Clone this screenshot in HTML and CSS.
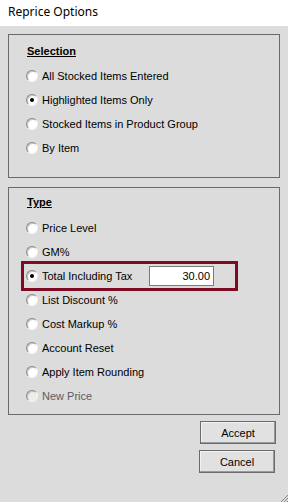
FILE: index.html
```html
<!DOCTYPE html>
<html lang="en">
<head>
  <meta charset="UTF-8" />
  <title>Reprice Options</title>
  <link rel="stylesheet" href="styles.css">
</head>
<body>
  <div class="titlebar">Reprice Options</div>
  <div class="dialog">
    <!-- Selection group -->
    <div class="group group-selection">
      <div class="group-title">Selection</div>
      <label class="option"><span class="radio"></span>All Stocked Items Entered</label>
      <label class="option"><span class="radio checked"></span>Highlighted Items Only</label>
      <label class="option"><span class="radio"></span>Stocked Items in Product Group</label>
      <label class="option"><span class="radio"></span>By Item</label>
    </div>

    <!-- Type group -->
    <div class="group group-type">
      <div class="group-title">Type</div>
      <label class="option"><span class="radio"></span>Price Level</label>
      <label class="option"><span class="radio"></span>GM%</label>
      <div class="option focus-row">
        <span class="radio checked"></span>
        <span class="focus-label">Total Including Tax</span>
        <span class="value-box">30.00</span>
      </div>
      <label class="option"><span class="radio"></span>List Discount %</label>
      <label class="option"><span class="radio"></span>Cost Markup %</label>
      <label class="option"><span class="radio"></span>Account Reset</label>
      <label class="option"><span class="radio"></span>Apply Item Rounding</label>
      <label class="option disabled"><span class="radio"></span>New Price</label>
    </div>

    <div class="buttons">
      <button class="btn btn-accept">Accept</button>
      <button class="btn btn-cancel">Cancel</button>
    </div>
  </div>

  <svg class="grip" width="8" height="8" viewBox="0 0 8 8">
    <path d="M8 1 L1 8 M8 4 L4 8 M8 7 L7 8" stroke="#8a8a8a" stroke-width="1" fill="none"/>
  </svg>
</body>
</html>
```

FILE: styles.css
```css
html, body {
  height: 100%;
}
body {
  margin: 0;
  background: #dcdcdc;
  font-family: "Liberation Sans", Arial, sans-serif;
  font-size: 11px;
  color: #000;
  position: relative;
  overflow: hidden;
}
.titlebar {
  height: 26px;
  line-height: 24px;
  padding-left: 8px;
  background: #fff;
  font-family: "Noto Sans", "Open Sans", sans-serif;
  font-size: 12px;
  color: #000;
}
.dialog {
  padding: 8px 8px 0 8px;
  display: flex;
  flex-direction: column;
}
.group {
  border: 1px solid #6a6a6a;
  padding: 0 0 0 17px;
  display: flex;
  flex-direction: column;
  box-sizing: border-box;
}
.group-selection {
  padding-top: 8px;
  height: 144px;
}
.group-type {
  margin-top: 9px;
  padding-top: 6px;
  height: 228px;
}
.group-title {
  font-weight: bold;
  text-decoration: underline;
  line-height: 16px;
  height: 16px;
  padding-left: 1px;
  margin-bottom: 5px;
}
.group-type .group-title {
  margin-bottom: 6px;
}
.option {
  display: flex;
  align-items: center;
  height: 24px;
  gap: 4px;
  white-space: nowrap;
}
.radio {
  width: 12px;
  height: 12px;
  box-sizing: border-box;
  border-radius: 50%;
  border: 1px solid;
  border-color: #8c8c8c #f4f4f4 #f4f4f4 #8c8c8c;
  background: #fff;
  box-shadow: inset 1px 1px 0 #c4c4c4;
  display: flex;
  align-items: center;
  justify-content: center;
  flex: none;
}
.radio.checked::after {
  content: "";
  width: 4px;
  height: 4px;
  border-radius: 50%;
  background: #000;
}
.disabled {
  color: #5f5a66;
}
.disabled .radio {
  background: #ececec;
}
.focus-row {
  align-self: flex-start;
  width: 209px;
  margin: -3px 0 -3px -5px;
  padding-left: 2px;
  border: 3px solid #7d0c22;
  height: 24px;
}
.focus-label {
  width: 103px;
}
.value-box {
  width: 65px;
  height: 20px;
  box-sizing: border-box;
  border: 1px solid #7a7a7a;
  background: #fff;
  text-align: right;
  line-height: 18px;
  padding-right: 3px;
}
.buttons {
  display: flex;
  flex-direction: column;
  align-items: flex-end;
  padding-right: 4px;
  margin-top: 6px;
  gap: 6px;
}
.btn {
  width: 76px;
  height: 23px;
  font-family: "Liberation Sans", Arial, sans-serif;
  font-size: 11px;
  color: #000;
  background: #e1e1e1;
  border: 1px solid #6b6b6b;
  box-shadow: inset -1px -1px 0 #9a9a9a, inset 1px 1px 0 #f2f2f2;
  padding: 0;
  margin: 0;
}
.btn-cancel {
  margin-right: 1px;
}
.grip {
  position: absolute;
  right: 0;
  bottom: 0;
}
```
